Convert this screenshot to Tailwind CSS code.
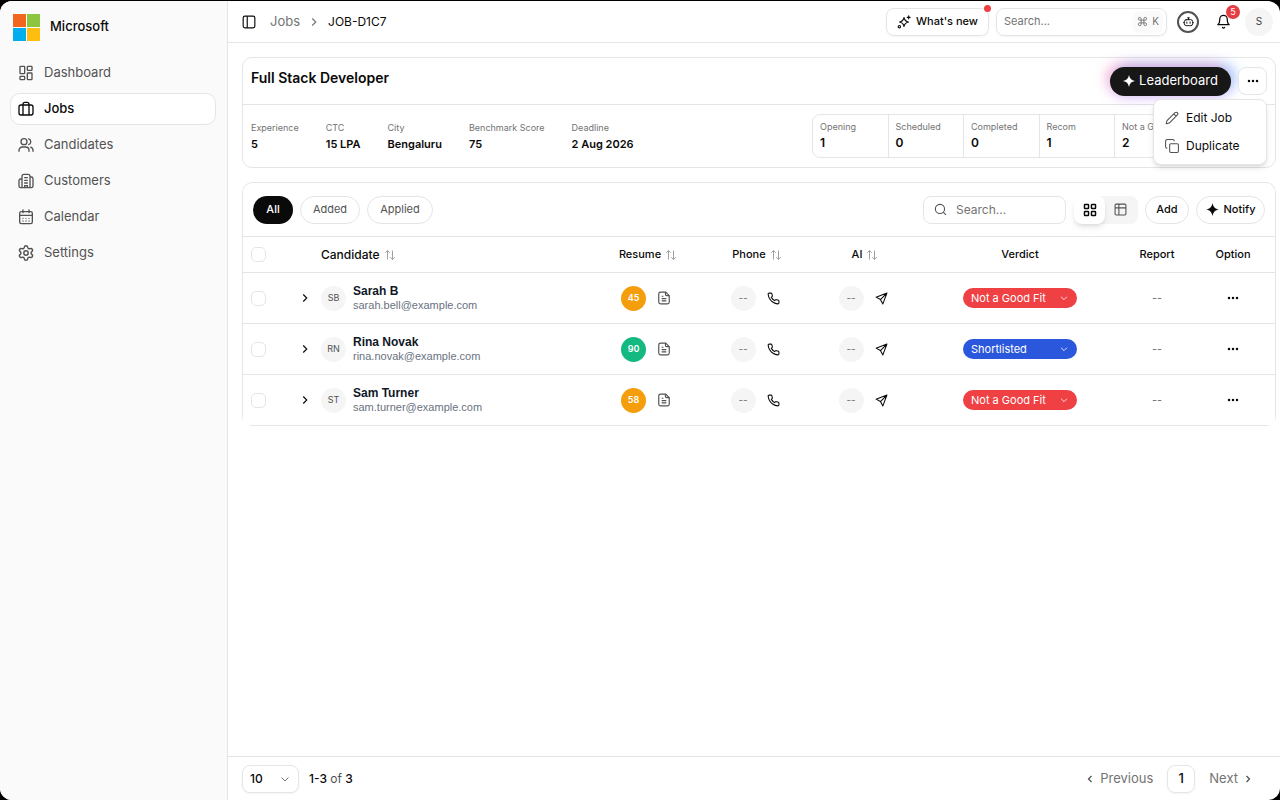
<!DOCTYPE html>
<html lang="en">
<head>
  <meta charset="UTF-8">
  <meta name="viewport" content="width=device-width, initial-scale=1.0">
  <script src="https://cdn.jsdelivr.net/npm/@tailwindcss/browser@4"></script>
  <title>JOB-D1C7 - Full Stack Developer</title>
</head>
<body class="bg-black pt-px font-['Inter',sans-serif] text-neutral-950">
  <!-- Shared icons -->
  <svg class="hidden">
    <symbol id="chevron-right" viewBox="0 0 24 24"><path d="m9 18 6-6-6-6"/></symbol>
    <symbol id="chevron-left" viewBox="0 0 24 24"><path d="m15 18-6-6 6-6"/></symbol>
    <symbol id="chevron-down" viewBox="0 0 24 24"><path d="m5 9 7 7 7-7"/></symbol>
    <symbol id="search" viewBox="0 0 24 24"><circle cx="11" cy="11" r="8.500"/><path d="m22 22-5-5"/></symbol>
    <symbol id="sort" viewBox="0 0 24 24"><path d="M7 21V3M2.500 7.500 7 3l4.500 4.500M17 3v18M12.500 16.500 17 21l4.500-4.500"/></symbol>
    <symbol id="dots" viewBox="0 0 24 24"><g fill="currentColor" stroke="none"><circle cx="4" cy="12" r="2.500"/><circle cx="12" cy="12" r="2.500"/><circle cx="20" cy="12" r="2.500"/></g></symbol>
    <symbol id="star" viewBox="0 0 24 24"><path fill="currentColor" stroke="none" d="M12 0c1.200 7.200 4.800 10.800 12 12-7.200 1.200-10.800 4.800-12 12-1.200-7.200-4.800-10.800-12-12 7.200-1.200 10.800-4.800 12-12Z"/></symbol>
    <symbol id="file" viewBox="0 0 24 24"><path d="M15 2H6a3 3 0 0 0-3 3v14a3 3 0 0 0 3 3h12a3 3 0 0 0 3-3V8Z"/><path d="M14.500 2v4a2 2 0 0 0 2 2H21M11 9H8M16 13H8M16 17H8"/></symbol>
    <symbol id="phone" viewBox="0 0 24 24"><path d="M22 16.920v3a2 2 0 0 1-2.180 2 19.790 19.790 0 0 1-8.630-3.070 19.500 19.500 0 0 1-6-6 19.790 19.790 0 0 1-3.070-8.670A2 2 0 0 1 4.110 2h3a2 2 0 0 1 2 1.720 12.840 12.840 0 0 0 .7 2.810 2 2 0 0 1-.45 2.110L8.090 9.910a16 16 0 0 0 6 6l1.270-1.270a2 2 0 0 1 2.110-.45 12.840 12.840 0 0 0 2.810.7A2 2 0 0 1 22 16.920z"/></symbol>
    <symbol id="send" viewBox="0 0 24 24"><path d="M22 2 2 9.500l8 4.500 4.500 8ZM22 2 10 14"/></symbol>
  </svg>

  <div class="flex min-h-[calc(100vh-1px)] overflow-hidden rounded-xl bg-white">
    <!-- Sidebar -->
    <aside class="w-[228px] shrink-0 border-r border-neutral-200 bg-neutral-50 pr-[11px] pl-[10px]">
      <div class="flex h-[52px] items-center gap-[10px] px-[3px]">
        <svg class="size-[27px]" viewBox="0 0 27 27">
          <rect width="13" height="13" fill="#f1651f"/><rect x="14" width="13" height="13" fill="#8cc63f"/>
          <rect y="14" width="13" height="13" fill="#00adef"/><rect x="14" y="14" width="13" height="13" fill="#fdbe0f"/>
        </svg>
        <span class="text-[13px] font-medium">Microsoft</span>
      </div>
      <nav class="mt-1 flex flex-col gap-1 text-[13px] text-neutral-600">
        <a href="#" class="flex h-8 items-center gap-[10px] px-2">
          <svg class="size-4" viewBox="0 0 24 24" fill="none" stroke="currentColor" stroke-width="2"><rect x="3" y="2" width="7" height="11" rx="1"/><rect x="14" y="2" width="7" height="6" rx="1"/><rect x="14" y="12" width="7" height="10" rx="1"/><rect x="3" y="17" width="7" height="5" rx="1"/></svg>
          Dashboard
        </a>
        <a href="#" class="flex h-8 items-center gap-[10px] rounded-[10px] border border-neutral-200 bg-white px-[7px] font-medium text-neutral-950">
          <svg class="size-4" viewBox="0 0 24 24" fill="none" stroke="currentColor" stroke-width="2"><rect x="1.500" y="6" width="21" height="15" rx="3"/><path d="M7.500 21V5a3 3 0 0 1 3-3h3a3 3 0 0 1 3 3v16"/></svg>
          Jobs
        </a>
        <a href="#" class="flex h-8 items-center gap-[10px] px-2">
          <svg class="size-4" viewBox="0 0 24 24" fill="none" stroke="currentColor" stroke-width="2" stroke-linecap="round"><circle cx="9" cy="7" r="4.500"/><path d="M1.500 21.500v-1.500a5 5 0 0 1 5-5h5a5 5 0 0 1 5 5v1.500M16 2.700a4.500 4.500 0 0 1 0 8.600M22.500 21.500v-1.500a5 5 0 0 0-3.500-4.800"/></svg>
          Candidates
        </a>
        <a href="#" class="flex h-8 items-center gap-[10px] px-2">
          <svg class="size-4" viewBox="0 0 24 24" fill="none" stroke="currentColor" stroke-width="2" stroke-linecap="round"><path d="M6 22V5a3 3 0 0 1 3-3h6a3 3 0 0 1 3 3v17M6 9H4a2.500 2.500 0 0 0-2.500 2.500v8A2.500 2.500 0 0 0 4 22h16a2.500 2.500 0 0 0 2.500-2.500v-11A2.500 2.500 0 0 0 20 6h-2M10 7h4M10 11h4M10 15h4M10 22v-3h4v3"/></svg>
          Customers
        </a>
        <a href="#" class="flex h-8 items-center gap-[10px] px-2">
          <svg class="size-4" viewBox="0 0 24 24" fill="none" stroke="currentColor" stroke-width="2" stroke-linecap="round"><rect x="2.500" y="4" width="19" height="18" rx="2.500"/><path d="M7.500 1.500v4M16.500 1.500v4M2.500 9.500h19M7.500 14h.01M12 14h.01M16.500 14h.01M7.500 18h.01M12 18h.01M16.500 18h.01"/></svg>
          Calendar
        </a>
        <a href="#" class="flex h-8 items-center gap-[10px] px-2">
          <svg class="size-4" viewBox="1 1 22 22" fill="none" stroke="currentColor" stroke-width="2"><path d="M9.671 4.136a2.340 2.340 0 0 1 4.659 0 2.340 2.340 0 0 0 3.319 1.915 2.340 2.340 0 0 1 2.330 4.033 2.340 2.340 0 0 0 0 3.831 2.340 2.340 0 0 1-2.330 4.033 2.340 2.340 0 0 0-3.319 1.915 2.340 2.340 0 0 1-4.659 0 2.340 2.340 0 0 0-3.320-1.915 2.340 2.340 0 0 1-2.330-4.033 2.340 2.340 0 0 0 0-3.831A2.340 2.340 0 0 1 6.350 6.051a2.340 2.340 0 0 0 3.319-1.915"/><circle cx="12" cy="12" r="3"/></svg>
          Settings
        </a>
      </nav>
    </aside>

    <main class="flex min-w-0 flex-1 flex-col">
      <!-- Top bar -->
      <header class="flex h-[42px] items-center border-b border-neutral-200 pr-[7px] pl-[14px]">
        <button type="button" aria-label="Toggle sidebar">
          <svg class="size-[14px]" viewBox="0 0 24 24" fill="none" stroke="currentColor" stroke-width="2"><rect x="2" y="2" width="20" height="20" rx="3"/><path d="M9 2v20"/></svg>
        </button>
        <a href="#" class="ml-[14px] text-[13px] text-neutral-500">Jobs</a>
        <svg class="mx-[7px] size-[14px] text-neutral-500" fill="none" stroke="currentColor" stroke-width="2"><use href="#chevron-right"/></svg>
        <span class="text-[12px]">JOB-D1C7</span>

        <button type="button" class="relative ml-auto flex h-7 w-[103px] items-center justify-center gap-[5px] rounded-lg border border-neutral-200 text-[11px] font-medium whitespace-nowrap shadow-xs">
          <svg class="size-[14px]" viewBox="0 0 24 24" fill="none" stroke="currentColor" stroke-width="2" stroke-linecap="round" stroke-linejoin="round"><path d="M12 4.500c1 4.500 3 6.500 7.500 7.500-4.500 1-6.500 3-7.500 7.500-1-4.500-3-6.500-7.500-7.500 4.500-1 6.500-3 7.500-7.500ZM20 1.500v5M17.500 4h5"/><circle cx="4" cy="20" r="2"/></svg>
          What's new
          <span class="absolute -top-1 -right-[3px] size-[7px] rounded-full bg-[#ef4044]"></span>
        </button>
        <label class="ml-[7px] flex h-7 w-[171px] items-center rounded-lg border border-neutral-200 pr-[3px] pl-[7px] shadow-xs">
          <input type="text" aria-label="Search" placeholder="Search..." class="min-w-0 flex-1 text-[11px] outline-none placeholder:text-neutral-500">
          <kbd class="flex h-[22px] items-center gap-1 rounded-md bg-neutral-50 px-1 font-['Inter',sans-serif] text-[10px] text-neutral-500">
            <svg class="size-[11px]" viewBox="0 0 24 24" fill="none" stroke="currentColor" stroke-width="2"><path d="M15 6v12a3 3 0 1 0 3-3H6a3 3 0 1 0 3 3V6a3 3 0 1 0-3 3h12a3 3 0 1 0-3-3"/></svg>
            K
          </kbd>
        </label>
        <button type="button" aria-label="Assistant" class="ml-[10px] flex size-[22px] items-center justify-center rounded-full border-2 border-neutral-600">
          <svg class="size-[11px]" viewBox="0 0 24 24" fill="none" stroke="currentColor" stroke-width="2" stroke-linecap="round"><path d="M12 8V4M10 4h4"/><rect x="3" y="8" width="18" height="13" rx="4"/><path d="M1 14.500h1M22 14.500h1M15.500 13v3M8.500 13v3"/></svg>
        </button>
        <button type="button" aria-label="Notifications" class="relative ml-[17px]">
          <svg class="size-[15px]" viewBox="0 0 24 24" fill="none" stroke="currentColor" stroke-width="2" stroke-linecap="round" stroke-linejoin="round"><path d="M6 8a6 6 0 0 1 12 0c0 7 3 9 3 9H3s3-2 3-9"/><path d="M10.300 21.500a2 2 0 0 0 3.400 0"/></svg>
          <span class="absolute -top-[9px] -right-[9px] flex size-[14px] items-center justify-center rounded-full bg-[#e53e42] text-[9px] text-white">5</span>
        </button>
        <span class="ml-[14px] flex size-7 items-center justify-center rounded-full bg-neutral-100 text-[10px] text-neutral-700">S</span>
      </header>

      <div class="flex flex-1 flex-col gap-[14px] py-[14px] pr-1 pl-[14px]">
        <!-- Job summary -->
        <section class="rounded-[10px] border border-neutral-200">
          <div class="flex h-[47px] items-center justify-between border-b border-neutral-200 px-2">
            <h1 class="pb-2 text-[14px] font-semibold">Full Stack Developer</h1>
            <div class="relative flex items-center gap-[7px]">
              <button type="button" class="flex h-[29px] w-[121px] items-center justify-center gap-1 rounded-full bg-neutral-900 text-[13px] text-white shadow-[-5px_-4px_12px_rgba(244,114,182,0.4),6px_-4px_12px_rgba(96,165,250,0.45),0_4px_12px_rgba(192,132,252,0.25)]">
                <svg class="size-3"><use href="#star"/></svg>
                Leaderboard
              </button>
              <button type="button" aria-label="More" class="flex h-7 w-[29px] items-center justify-center rounded-lg border border-neutral-200 bg-white"><svg class="size-3"><use href="#dots"/></svg></button>
              <div class="absolute top-full right-0 z-10 mt-[3px] w-[114px] rounded-lg border border-neutral-200 bg-white p-1 text-[12px] shadow-md">
                <button type="button" class="flex h-7 w-full items-center gap-[7px] px-[7px] whitespace-nowrap">
                  <svg class="size-[14px] text-neutral-600" viewBox="0 0 24 24" fill="none" stroke="currentColor" stroke-width="1.800" stroke-linejoin="round"><path d="M21.174 6.812a1 1 0 0 0-3.986-3.987L3.842 16.174a2 2 0 0 0-.5.83l-1.321 4.352a.5.5 0 0 0 .623.622l4.353-1.320a2 2 0 0 0 .83-.497ZM15 5l4 4"/></svg>
                  Edit Job
                </button>
                <button type="button" class="flex h-7 w-full items-center gap-[7px] px-[7px] whitespace-nowrap">
                  <svg class="size-[14px] text-neutral-600" viewBox="0 0 24 24" fill="none" stroke="currentColor" stroke-width="1.800"><rect x="8" y="8" width="15" height="15" rx="2"/><path d="M4 16a3 3 0 0 1-3-3V4a3 3 0 0 1 3-3h9a3 3 0 0 1 3 3"/></svg>
                  Duplicate
                </button>
              </div>
            </div>
          </div>
          <div class="flex items-center justify-between px-2 py-[9px]">
            <dl class="flex gap-[27px] text-[11px] leading-4 whitespace-nowrap">
              <div><dt class="text-[9px] text-neutral-500">Experience</dt><dd class="font-semibold">5</dd></div>
              <div><dt class="text-[9px] text-neutral-500">CTC</dt><dd class="font-semibold">15 LPA</dd></div>
              <div><dt class="text-[9px] text-neutral-500">City</dt><dd class="font-semibold">Bengaluru</dd></div>
              <div><dt class="text-[9px] text-neutral-500">Benchmark Score</dt><dd class="font-semibold">75</dd></div>
              <div><dt class="text-[9px] text-neutral-500">Deadline</dt><dd class="font-semibold">2 Aug 2026</dd></div>
            </dl>
            <dl class="grid h-[44px] w-[455px] grid-cols-6 divide-x divide-neutral-200 overflow-hidden rounded-lg border border-neutral-200 text-[12px] leading-4 font-semibold whitespace-nowrap">
              <div class="px-[7px] py-1"><dt class="text-[9px] font-normal text-neutral-500">Opening</dt><dd>1</dd></div>
              <div class="px-[7px] py-1"><dt class="text-[9px] font-normal text-neutral-500">Scheduled</dt><dd>0</dd></div>
              <div class="px-[7px] py-1"><dt class="text-[9px] font-normal text-neutral-500">Completed</dt><dd>0</dd></div>
              <div class="px-[7px] py-1"><dt class="text-[9px] font-normal text-neutral-500">Recom</dt><dd>1</dd></div>
              <div class="px-[7px] py-1"><dt class="text-[9px] font-normal text-neutral-500">Not a Good</dt><dd>2</dd></div>
              <div></div>
            </dl>
          </div>
        </section>

        <!-- Candidates -->
        <section class="overflow-hidden rounded-[10px]">
          <div class="rounded-t-[10px] border border-b-0 border-neutral-200">
            <div class="flex h-[53px] items-center px-[10px]">
              <div class="flex gap-[7px] text-[11px] text-neutral-600">
                <button type="button" class="h-7 w-10 rounded-full bg-neutral-950 font-medium text-white">All</button>
                <button type="button" class="h-7 w-[60px] rounded-full border border-neutral-200">Added</button>
                <button type="button" class="h-7 w-[66px] rounded-full border border-neutral-200">Applied</button>
              </div>
              <label class="ml-auto flex h-7 w-[143px] items-center gap-[9px] rounded-lg border border-neutral-200 px-[10px] text-neutral-600">
                <svg class="size-[13px] shrink-0" fill="none" stroke="currentColor" stroke-width="2"><use href="#search"/></svg>
                <input type="text" aria-label="Search candidates" placeholder="Search..." class="min-w-0 flex-1 text-[12px] outline-none placeholder:text-neutral-500">
              </label>
              <div class="ml-2 flex w-16 rounded-lg bg-neutral-100">
                <button type="button" aria-label="Grid view" class="flex h-7 w-[31px] items-center justify-center rounded-lg bg-white shadow-md">
                  <svg class="size-[14px]" viewBox="0 0 24 24" fill="none" stroke="currentColor" stroke-width="2.500"><rect x="2.500" y="2.500" width="7" height="7" rx="1"/><rect x="14.500" y="2.500" width="7" height="7" rx="1"/><rect x="2.500" y="14.500" width="7" height="7" rx="1"/><rect x="14.500" y="14.500" width="7" height="7" rx="1"/></svg>
                </button>
                <button type="button" aria-label="Table view" class="flex h-7 w-[31px] items-center justify-center text-neutral-600">
                  <svg class="size-[13px]" viewBox="0 0 24 24" fill="none" stroke="currentColor" stroke-width="2"><rect x="2" y="2" width="20" height="20" rx="2"/><path d="M9 2v20M2 9h20"/></svg>
                </button>
              </div>
              <button type="button" class="ml-[7px] h-7 w-11 rounded-full border border-neutral-200 text-[11px] font-medium">Add</button>
              <button type="button" class="ml-[7px] flex h-7 w-[69px] items-center justify-center gap-[5px] rounded-full border border-neutral-200 text-[11px] font-medium"><svg class="size-[13px]"><use href="#star"/></svg>Notify</button>
            </div>
            <table class="w-full table-fixed text-[11px]">
              <colgroup>
                <col class="w-[46px]"><col class="w-8"><col><col class="w-[106px]"><col class="w-28"><col class="w-[104px]"><col class="w-[206px]"><col class="w-[68px]"><col class="w-[84px]">
              </colgroup>
              <thead>
                <tr class="h-9 border-y border-neutral-200 [&>th]:p-0 [&>th]:font-medium">
                  <th class="text-left"><input type="checkbox" aria-label="Select all" class="ml-2 block size-[15px] appearance-none rounded-[5px] border border-neutral-200"></th>
                  <th></th>
                  <th><span class="flex items-center gap-1 text-[12px]">Candidate <svg class="size-3 text-neutral-400" fill="none" stroke="currentColor" stroke-width="2"><use href="#sort"/></svg></span></th>
                  <th><span class="flex items-center justify-center gap-1">Resume <svg class="size-3 text-neutral-400" fill="none" stroke="currentColor" stroke-width="2"><use href="#sort"/></svg></span></th>
                  <th><span class="flex items-center justify-center gap-1">Phone <svg class="size-3 text-neutral-400" fill="none" stroke="currentColor" stroke-width="2"><use href="#sort"/></svg></span></th>
                  <th><span class="flex items-center justify-center gap-1">AI <svg class="size-3 text-neutral-400" fill="none" stroke="currentColor" stroke-width="2"><use href="#sort"/></svg></span></th>
                  <th>Verdict</th>
                  <th>Report</th>
                  <th>Option</th>
                </tr>
              </thead>
              <tbody id="candidate-rows"></tbody>
            </table>
          </div>
        </section>
      </div>

      <!-- Pagination -->
      <footer class="flex h-11 items-center border-t border-neutral-200 pr-[26px] pl-[14px] text-[13px] text-neutral-600">
        <div class="relative flex items-center">
          <select aria-label="Rows per page" class="h-7 w-[57px] appearance-none rounded-lg border border-neutral-200 bg-white pl-[7px] text-[12px] font-medium text-neutral-950 shadow-xs">
            <option>10</option>
            <option>25</option>
          </select>
          <svg class="pointer-events-none absolute right-2 size-3 text-neutral-500" fill="none" stroke="currentColor" stroke-width="2"><use href="#chevron-down"/></svg>
        </div>
        <p class="ml-[10px] text-[12px]"><b class="font-medium text-neutral-950">1-3</b> of <b class="font-medium text-neutral-950">3</b></p>
        <button type="button" class="ml-auto flex items-center gap-1 text-neutral-500"><svg class="size-3 text-neutral-600" fill="none" stroke="currentColor" stroke-width="2.500"><use href="#chevron-left"/></svg>Previous</button>
        <button type="button" class="mx-[14px] size-7 rounded-lg border border-neutral-200 font-medium text-neutral-950 shadow-xs">1</button>
        <button type="button" class="flex items-center gap-1 text-neutral-500">Next<svg class="size-3 text-neutral-600" fill="none" stroke="currentColor" stroke-width="2.500"><use href="#chevron-right"/></svg></button>
      </footer>
    </main>
  </div>

  <script>
    const candidates = [
      { name: 'Sarah B', initials: 'SB', email: 'sarah.bell@example.com', resume: 45, verdict: 'Not a Good Fit' },
      { name: 'Rina Novak', initials: 'RN', email: 'rina.novak@example.com', resume: 90, verdict: 'Shortlisted' },
      { name: 'Sam Turner', initials: 'ST', email: 'sam.turner@example.com', resume: 58, verdict: 'Not a Good Fit' }
    ];

    document.getElementById('candidate-rows').innerHTML = candidates.map(c => `
      <tr class="h-[51px] border-b border-neutral-200 [&>td]:p-0">
        <td><input type="checkbox" aria-label="Select ${c.name}" class="ml-2 block size-[15px] appearance-none rounded-[5px] border border-neutral-200"></td>
        <td><button type="button" aria-label="Expand ${c.name}" class="mx-auto block"><svg class="size-[14px]" fill="none" stroke="currentColor" stroke-width="2"><use href="#chevron-right"/></svg></button></td>
        <td>
          <div class="flex items-center gap-[7px]">
            <span class="flex size-[25px] items-center justify-center rounded-full bg-neutral-100 text-[9px] text-neutral-600">${c.initials}</span>
            <div class="font-['Liberation_Sans',sans-serif]">
              <p class="text-[12px] leading-[14px] font-bold text-gray-900">${c.name}</p>
              <p class="text-[11px] leading-[14px] text-gray-500">${c.email}</p>
            </div>
          </div>
        </td>
        <td>
          <div class="flex items-center justify-center gap-[11px] pr-1">
            <span class="flex size-[25px] items-center justify-center rounded-full text-[9px] font-semibold text-white ${c.resume >= 75 ? 'bg-[#14b981]' : 'bg-[#f59e0b]'}">${c.resume}</span>
            <button type="button" aria-label="Open resume"><svg class="size-[14px] text-neutral-600" fill="none" stroke="currentColor" stroke-width="2"><use href="#file"/></svg></button>
          </div>
        </td>
        <td>
          <div class="flex items-center justify-center gap-[11px] pr-1">
            <span class="flex size-[25px] items-center justify-center rounded-full bg-neutral-100 text-[10px] text-neutral-500">--</span>
            <button type="button" aria-label="Call"><svg class="size-[13px]" fill="none" stroke="currentColor" stroke-width="2"><use href="#phone"/></svg></button>
          </div>
        </td>
        <td>
          <div class="flex items-center justify-center gap-[11px] pr-1">
            <span class="flex size-[25px] items-center justify-center rounded-full bg-neutral-100 text-[10px] text-neutral-500">--</span>
            <button type="button" aria-label="Send AI interview"><svg class="size-[13px]" fill="none" stroke="currentColor" stroke-width="2" stroke-linejoin="round"><use href="#send"/></svg></button>
          </div>
        </td>
        <td>
          <div class="relative mx-auto flex w-[114px] items-center text-white">
            <select aria-label="Verdict for ${c.name}" class="h-5 w-full appearance-none rounded-full pl-2 text-[11px] ${c.verdict === 'Shortlisted' ? 'bg-[#2b57dd]' : 'bg-[#ef4044]'}">
              <option ${c.verdict === 'Not a Good Fit' ? 'selected' : ''}>Not a Good Fit</option>
              <option ${c.verdict === 'Shortlisted' ? 'selected' : ''}>Shortlisted</option>
            </select>
            <svg class="pointer-events-none absolute right-2 size-[10px]" fill="none" stroke="currentColor" stroke-width="2"><use href="#chevron-down"/></svg>
          </div>
        </td>
        <td class="text-center text-neutral-500">--</td>
        <td><button type="button" aria-label="Options for ${c.name}" class="mx-auto block"><svg class="size-3"><use href="#dots"/></svg></button></td>
      </tr>
    `).join('');
  </script>
</body>
</html>
